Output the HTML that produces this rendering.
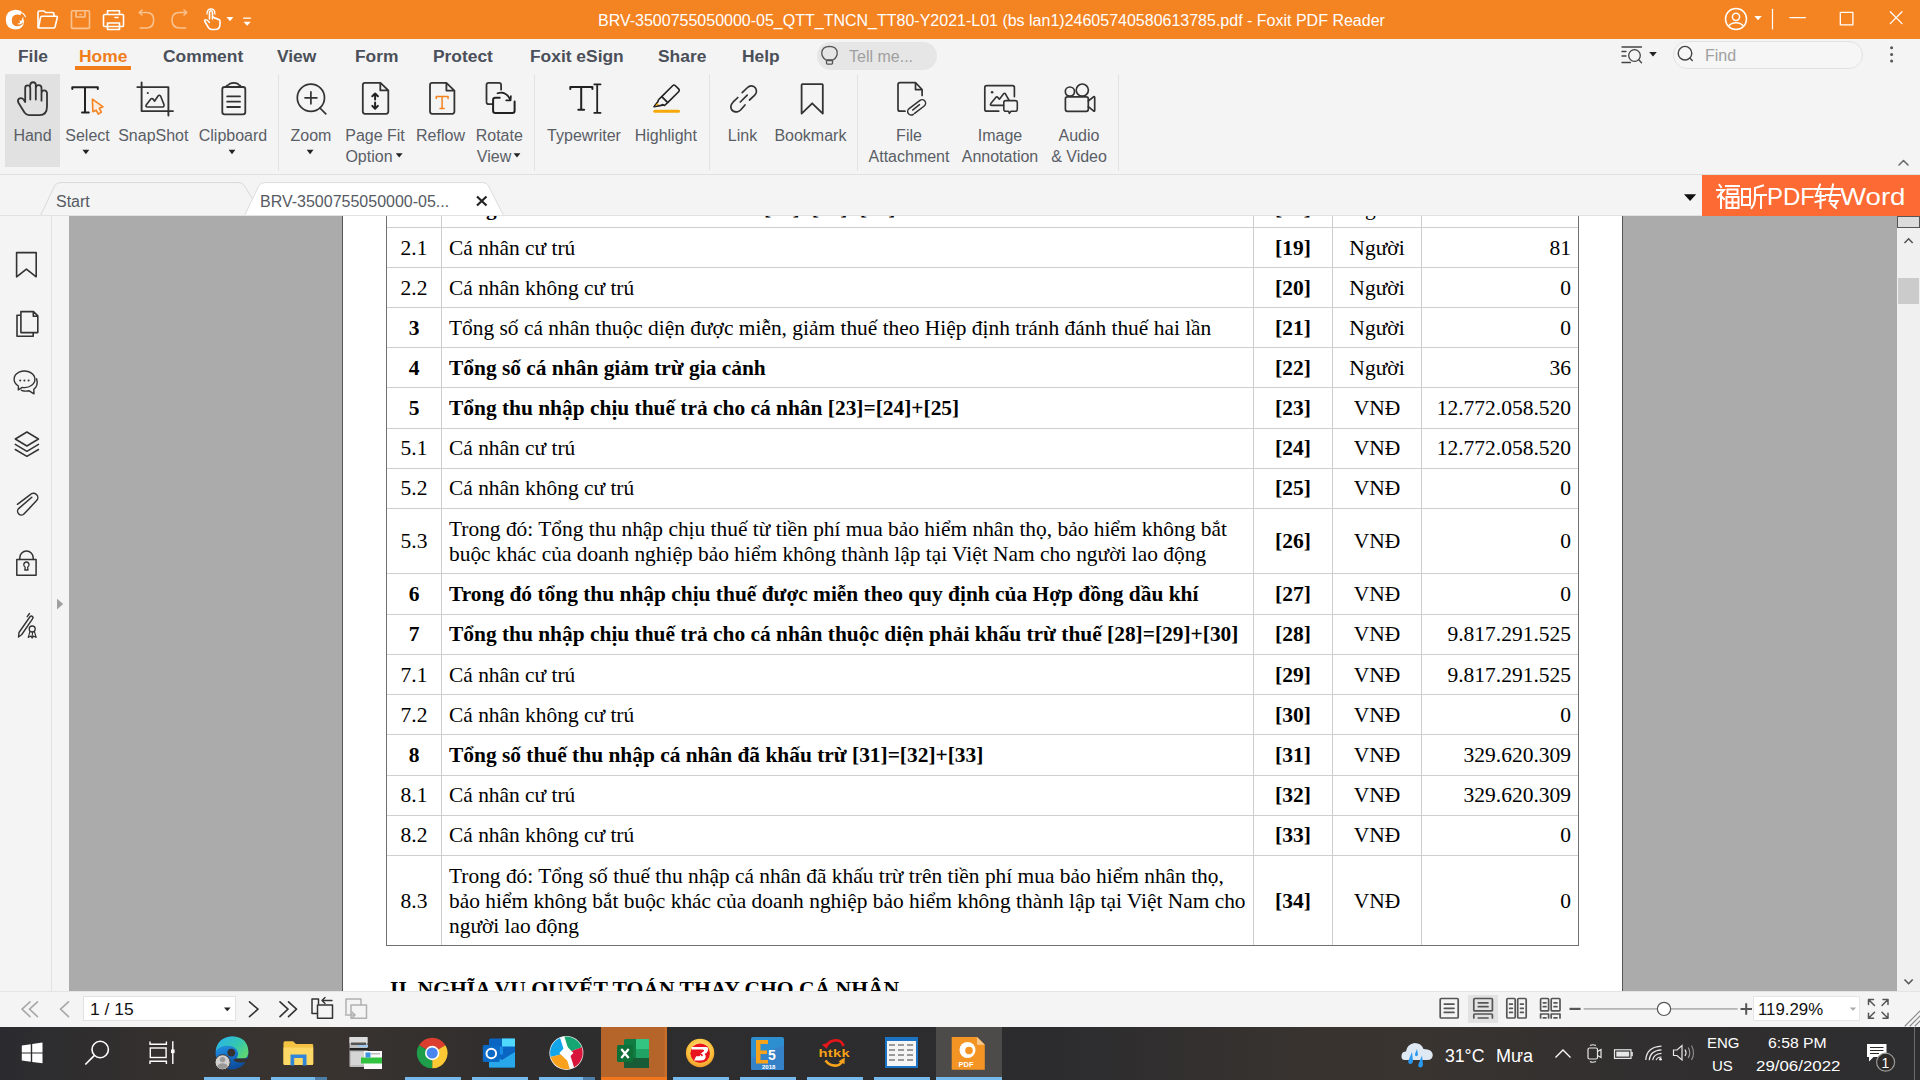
<!DOCTYPE html>
<html><head><meta charset="utf-8">
<style>
*{margin:0;padding:0;box-sizing:border-box}
html,body{width:1920px;height:1080px;overflow:hidden;background:#f4f4f4;font-family:"Liberation Sans",sans-serif}
.a{position:absolute;white-space:nowrap}
#title{left:0;top:0;width:1920px;height:39px;background:#f48322}
.tt{color:#fff;font-size:16px}
.menu{font-size:17.4px;font-weight:bold;color:#4a4f59;top:46px}
.rl{font-size:16px;color:#5a5e66;text-align:center;line-height:21px;margin-top:1px}
.sep{background:#e0e0e0;width:1px}
#doc{left:69px;top:216px;width:1828px;height:775px;background:#ababab;overflow:hidden}
#page{left:273px;top:0;width:1281px;height:775px;background:#fff;border-left:1px solid #555;border-right:1px solid #555}
.ser{font-family:"Liberation Serif",serif;font-size:21.5px;color:#000}
.b{font-weight:bold}
.hl{background:#cfcfcf;height:1px}
.vl{background:#cdcdcd;width:1px}
#taskbar{left:0;top:1027px;width:1920px;height:53px;background:#2c2927}
</style></head><body>
<div id="title" class="a"></div>
<svg class="a" style="left:0;top:0" width="1920" height="39" viewBox="0 0 1920 39" fill="none" stroke="#fff" stroke-width="1.6" stroke-linecap="round" stroke-linejoin="round">
<!-- foxit logo -->
<path fill-rule="evenodd" d="M21.5 11.3 Q18.5 9.6 15 9.8 Q6 10.5 5.8 19.8 Q6 29.3 15.5 29.5 Q23.8 29.3 24 21 L22.2 17.5 Q23.5 21 22.6 24 Q20.5 26.3 16.8 26.2 Q11.8 26 11.8 20.3 Q12 15 17 14.6 Q19 14.5 20.5 15.3 Z" fill="#fff" stroke="none"/>
<path d="M23.2 16.5 L21.3 21 L19.2 20.2 L20.2 22.8 L17 24 Q20.5 25.3 22.6 22.8 Q23.8 20.5 23.2 16.5 Z" fill="#fff" stroke="none"/>
<path d="M18.5 12 Q23.8 12.5 25.4 16.8" stroke-width="1.1"/>
<!-- folder -->
<path d="M38 27.5 V12.5 Q38 11 39.5 11 H44 L45.5 12.5 H52.5 Q54 12.5 54 14 V16"/>
<path d="M38.5 27.8 L40.5 17.5 Q40.8 16.3 42 16.3 H56.5 Q57.6 16.3 57.3 17.5 L55 27 Q54.7 28 53.5 28 H39 Z"/>
<!-- save faded -->
<g stroke="#f9c391"><rect x="71.5" y="10.7" width="18" height="17.7" rx="1"/><path d="M76 10.7 V17 H85 V10.7"/><path d="M80 14.5 H81.2"/></g>
<!-- print -->
<path d="M107.5 14 V10.8 H119.5 V14"/>
<rect x="103.5" y="14.5" width="20" height="12" rx="1"/>
<rect x="107.5" y="23" width="12" height="6.5"/>
<path d="M115 17.5 H118"/>
<!-- undo faded -->
<g stroke="#f9c391"><path d="M139.5 12.5 H146.5 Q153.7 12.5 153.7 20 Q153.7 28 146 28 H140.3"/><path d="M142 10 L139.3 12.5 L142 15"/>
<path d="M186.5 12.5 H179.5 Q172 12.5 172 20 Q172 28 180 28 H185.7"/><path d="M184 10 L186.7 12.5 L184 15"/></g>
<!-- hand touch -->
<path d="M209.5 19 V12.5 Q209.5 10.8 211 10.8 Q212.5 10.8 212.5 12.5 V19 M212.5 17.5 Q214.5 16.8 215 18.5 M215 18.5 Q217 17.8 217.5 19.5 Q219.8 19 220 21 V24 Q220 29.5 215 29.5 H212 Q209 29.5 207.5 26 L204.8 21.5 Q204.3 20 205.5 19.8 Q207 19.5 209.5 22.5"/>
<path d="M207 14 Q207 9 211 9 Q215 9 215 14" stroke-width="1.3"/>
<path d="M226.5 17 H233.5 L230 21.3 Z" fill="#fff" stroke="none"/>
<path d="M243.7 18.2 H250.5" stroke-width="1.3"/>
<path d="M243.5 21.7 H250.8 L247.15 25.8 Z" fill="#fff" stroke="none"/>
<!-- right -->
<circle cx="1736" cy="19" r="10.5" stroke-width="1.5"/>
<circle cx="1736" cy="16.8" r="3.6" stroke-width="1.5"/>
<path d="M1728.5 26.3 Q1731 22.7 1736 22.7 Q1741 22.7 1743.5 26.3" stroke-width="1.5"/>
<path d="M1754.3 16 H1761.8 L1758 20.2 Z" fill="#fff" stroke="none"/>
<path d="M1772.5 9.3 V29" stroke-width="1.2"/>
<path d="M1790 17.7 H1805.3" stroke-width="1.3"/>
<rect x="1840.3" y="12.3" width="12.6" height="12.6" stroke-width="1.3"/>
<path d="M1890.3 11.7 L1902 23.6 M1902 11.7 L1890.3 23.6" stroke-width="1.3"/>
</svg>

<div class="a tt" style="left:598px;top:12px">BRV-3500755050000-05_QTT_TNCN_TT80-Y2021-L01 (bs lan1)24605740580613785.pdf - Foxit PDF Reader</div>

<!-- menu -->
<div class="a menu" style="left:18px">File</div>
<div class="a menu" style="left:79px;color:#f07d1a">Home</div>
<div class="a" style="left:75px;top:66px;width:56px;height:4px;background:#f07d1a"></div>
<div class="a menu" style="left:163px">Comment</div>
<div class="a menu" style="left:277px">View</div>
<div class="a menu" style="left:355px">Form</div>
<div class="a menu" style="left:433px">Protect</div>
<div class="a menu" style="left:530px">Foxit eSign</div>
<div class="a menu" style="left:658px">Share</div>
<div class="a menu" style="left:742px">Help</div>
<div class="a" style="left:817px;top:42px;width:120px;height:28px;background:#e6e6e6;border-radius:14px"></div>
<div class="a" style="left:849px;top:48px;font-size:16px;color:#a0a0a0">Tell me...</div>

<div class="a" style="left:1673px;top:41px;width:190px;height:28px;background:#f6f6f6;border:1px solid #e2e2e2;border-radius:14px"></div>
<div class="a" style="left:1705px;top:47px;font-size:16px;color:#a0a0a0">Find</div>

<!-- ribbon -->
<div class="a" style="left:5px;top:74px;width:55px;height:93px;background:#e1e1e1"></div>
<div class="a" style="left:0;top:174px;width:1920px;height:1px;background:#e0e0e0"></div>

<svg class="a" style="left:0;top:36px" width="1920" height="140" viewBox="0 36 1920 140" fill="none" stroke="#333" stroke-width="1.7" stroke-linecap="round" stroke-linejoin="round">
<!-- Tell me bulb -->
<path d="M826 60 Q821.5 57 821.8 52.5 Q822.3 46.5 829.5 46.3 Q836.8 46.5 837.2 52.5 Q837.5 57 833 60 Z" stroke="#555" stroke-width="1.3"/>
<rect x="826.5" y="60.5" width="6" height="3.6" rx="0.8" stroke="#555" stroke-width="1.3"/>
<!-- search mode icon -->
<g stroke="#444" stroke-width="1.3"><path d="M1622 47 H1641.5 M1622 51.5 H1626 M1622 56 H1626 M1622 62.5 H1630.5"/><circle cx="1634.5" cy="55.5" r="5.8"/><path d="M1638.8 59.8 L1641.5 62.8"/></g>
<path d="M1649.2 52 H1656.8 L1653 56.6 Z" fill="#222" stroke="none"/>
<g stroke="#444" stroke-width="1.4"><circle cx="1685" cy="53.2" r="6.8"/><path d="M1689.8 58 L1692.3 60.4"/></g>
<g fill="#555" stroke="none"><circle cx="1891.6" cy="47.8" r="1.5"/><circle cx="1891.6" cy="54.4" r="1.5"/><circle cx="1891.6" cy="61" r="1.5"/></g>

<!-- Hand -->
<path d="M25.2 102 V88 A2.55 2.55 0 0 1 30.3 88 V99.6 M30.3 85 A2.75 2.75 0 0 1 35.8 85 V99.6 M35.8 88 A2.85 2.85 0 0 1 41.5 88 V100.7 M41.5 93.2 A2.75 2.75 0 0 1 47 93.2 V106.5 Q47 115.2 39.5 115.2 H29 Q26.5 115.2 24.5 112.5 L18.6 103 Q17 100.2 19.2 98.6 Q21.8 97.2 23.8 99.8 L25.2 102" stroke-width="1.8"/>
<!-- Select -->
<path d="M72.3 89 V87.2 H97.8 V89 M85 87.2 V112.6 M82 112.6 H88.8" stroke="#222" stroke-width="2"/>
<path d="M92.4 99.2 L103 106.8 L99.3 108.3 L101.4 112.2 L98.3 114.2 L96.1 110.2 L92.9 111.7 Z" fill="#fdece0" stroke="#f5821f" stroke-width="1.6"/>
<!-- SnapShot -->
<path d="M137.3 87.1 H168.4 V115.5 M141.6 82.4 V111.1 H173" stroke-width="1.9"/>
<circle cx="147.8" cy="93" r="1.1" fill="#333" stroke="none"/>
<path d="M146.4 104.8 L150.8 98.9 Q152.6 97.4 154.5 101.2 L158.2 95.8 Q159.5 94.5 160.8 96.5 L164 104.6 Q164.5 107 162 107 H147.5 Q145 107 146.4 104.8 Z" stroke-width="1.6"/>
<!-- Clipboard -->
<rect x="222.3" y="87" width="23" height="27.3" rx="2.3" stroke-width="1.8"/>
<path d="M226.3 87 Q226.3 85 228.5 85 Q229.5 82.8 233.8 82.8 Q238 82.8 238.8 85 Q240.7 85 240.7 87" stroke-width="1.7"/>
<path d="M227.2 96.4 H240 M227.2 101.7 H240 M227.2 107 H240" stroke-width="1.8"/>
<!-- Zoom -->
<circle cx="310.9" cy="97.8" r="13.6" stroke-width="1.7"/>
<path d="M305 97.8 H316.9 M310.9 91.8 V103.8 M319.9 108 L325.8 113.8" stroke-width="1.7"/>
<!-- Page Fit -->
<path d="M380.5 82.9 H365 Q362.8 82.9 362.8 85.1 V111.6 Q362.8 113.8 365 113.8 H386.1 Q388.3 113.8 388.3 111.6 V90.4 Z M380.3 83 V90.4 H388.3" stroke-width="1.8"/>
<path d="M375.1 93.8 V99.5 M375.1 102.4 V108.3 M372.3 96.3 L375.1 93.5 L377.9 96.3 M372.3 105.9 L375.1 108.7 L377.9 105.9" stroke="#222" stroke-width="2"/>
<!-- Reflow -->
<path d="M446.4 82.9 H432.2 Q430 82.9 430 85.1 V111.6 Q430 113.8 432.2 113.8 H452.2 Q454.4 113.8 454.4 111.6 V90.6 Z M446.4 83 V90.6 H454.4" stroke-width="1.8"/>
<path d="M436.3 98.4 V96.6 H448.1 V98.4 M442.1 96.6 V108.6 M440 108.6 H444.2" stroke="#f5821f" stroke-width="1.5"/>
<!-- Rotate -->
<path d="M486.5 100.5 V85.1 Q486.5 82.9 488.7 82.9 H498.9 Q501.1 82.9 501.1 85.1 V89.7 M486.5 101.9 Q486.5 104.1 488.7 104.1 H492.8" stroke-width="1.8"/>
<path d="M499.7 97.8 H495.3 Q493.1 97.8 493.1 100 V110.8 Q493.1 113 495.3 113 H512.4 Q514.6 113 514.6 110.8 V101.5" stroke="#222" stroke-width="2"/>
<path d="M497.5 93.3 Q506 90.5 510.6 100.2 M506.2 100.4 L510.6 100.3 L510.9 96" stroke="#222" stroke-width="1.7"/>
<!-- separators -->
<g stroke="#e2e2e2" stroke-width="1"><path d="M278.5 75 V170 M534.5 75 V170 M709.5 75 V170 M857.5 75 V170 M1118.5 75 V170"/></g>
<!-- Typewriter -->
<path d="M570.3 89 V87.1 H592.4 V89 M581.2 87.1 V109.8 M578.3 109.8 H584.1" stroke="#222" stroke-width="2"/>
<path d="M597.2 84.5 V112.8 M594.3 84.4 H600.5 M594.3 112.9 H600.5" stroke="#222" stroke-width="1.8"/>
<!-- Highlight -->
<path d="M661.7 96.6 L672.6 85.7 Q674 84.3 675.4 85.7 L678.6 88.9 Q680 90.3 678.6 91.7 L667.7 102.6 M661.7 96.6 L659 99.3 Q658 100.3 658 101.5 L654 106.8 L660 105.6 Q661.4 105.6 662.5 104.6 L664.5 105.5 L667.7 102.6 Z M661.8 96.6 L667.6 102.4" stroke="#222" stroke-width="1.6"/>
<path d="M655 106 L657.3 103 L659 104.8 Z" fill="#f5a90a" stroke="none"/>
<path d="M654.8 111.2 H678.5" stroke="#f5a90a" stroke-width="3"/>
<!-- Link -->
<path d="M737.8 97.5 L733 102.2 Q729.8 105.8 731.4 109.2 Q733.6 112.6 737.6 111.8 Q739.2 111.3 740.6 110 L745 105" stroke-width="1.7"/>
<path d="M742.2 92.7 L747 88 Q750.2 84.8 753.6 86.4 Q757 88.6 756.3 92.4 Q755.9 94 754.5 95.4 L749.5 100" stroke-width="1.7"/>
<path d="M740.3 102 L747.2 95.2" stroke-width="1.7"/>
<!-- Bookmark -->
<path d="M801.6 113.6 V85 Q801.6 84.2 802.4 84.2 H822 Q822.8 84.2 822.8 85 V113.6 L812.2 103.3 Z" stroke-width="1.8"/>
<!-- File Attachment -->
<path d="M905 111.2 H900 Q898 111.2 898 109.2 V84.7 Q898 82.7 900 82.7 H915.5 L922.1 89.5 V95.5 M915.5 82.8 V89.6 H922" stroke-width="1.7"/>
<path d="M914.6 113.4 L924.2 106 A3.5 3.5 0 0 0 920 100.4 L909.1 108.7 A3.5 3.5 0 0 0 913.3 114.3" stroke-width="1.5"/><path d="M912.6 110.1 L919.5 104.6" stroke-width="1.4"/>
<!-- Image Annotation -->
<path d="M998.7 111.2 H986.8 Q984.8 111.2 984.8 109.2 V87.7 Q984.8 85.7 986.8 85.7 H1012.4 Q1014.4 85.7 1014.4 87.7 V96.6" stroke-width="1.7"/>
<circle cx="992.1" cy="92.2" r="1.3" fill="#333" stroke="none"/>
<path d="M1003.4 105.4 H992 Q989.6 105.4 990.8 103.6 L995.8 97.4 Q996.8 96.4 997.8 97.4 L999.4 99.2 L1003.8 93.6 Q1004.6 92.8 1005.4 93.8 L1008.9 100" stroke-width="1.6"/>
<path d="M1005.8 100.6 H1015.3 Q1017.3 100.6 1017.3 102.6 V109.2 Q1017.3 111.2 1015.3 111.2 H1011 L1009.4 113.4 L1008.6 111.2 H1005.8 Q1003.8 111.2 1003.8 109.2 V102.6 Q1003.8 100.6 1005.8 100.6 Z" stroke-width="1.6"/>
<!-- Audio Video -->
<circle cx="1069.9" cy="91.6" r="4.6" stroke-width="1.7"/>
<circle cx="1082.3" cy="90.1" r="6.1" stroke-width="1.7"/>
<rect x="1065.4" y="96.9" width="22.9" height="14.4" rx="2" stroke-width="1.7"/>
<path d="M1088.3 101 L1093.5 96.8 Q1094.7 96 1094.7 97.6 V110.3 Q1094.7 111.8 1093.5 110.9 L1088.3 106.7" stroke-width="1.7"/>
<!-- dropdown arrows -->
<g fill="#222" stroke="none">
<path d="M82.5 149.8 H89.3 L85.9 154.2 Z"/>
<path d="M228.6 149.8 H235.4 L232 154.2 Z"/>
<path d="M306.7 149.8 H313.5 L310.1 154.2 Z"/>
<path d="M395.8 153.2 H402.6 L399.2 157.6 Z"/>
<path d="M513.6 153.2 H520.4 L517 157.6 Z"/>
</g>
<!-- collapse caret -->
<path d="M1899 165 L1903.5 160.5 L1908 165" stroke="#666" stroke-width="1.5"/>
</svg>

<div class="a rl" style="left:-27.5px;width:120px;top:124px">Hand</div>
<div class="a rl" style="left:27.5px;width:120px;top:124px">Select</div>
<div class="a rl" style="left:93.30000000000001px;width:120px;top:124px">SnapShot</div>
<div class="a rl" style="left:173px;width:120px;top:124px">Clipboard</div>
<div class="a rl" style="left:251px;width:120px;top:124px">Zoom</div>
<div class="a rl" style="left:315px;width:120px;top:124px">Page Fit</div>
<div class="a rl" style="left:380.5px;width:120px;top:124px">Reflow</div>
<div class="a rl" style="left:439.3px;width:120px;top:124px">Rotate</div>
<div class="a rl" style="left:524px;width:120px;top:124px">Typewriter</div>
<div class="a rl" style="left:605.8px;width:120px;top:124px">Highlight</div>
<div class="a rl" style="left:682.5px;width:120px;top:124px">Link</div>
<div class="a rl" style="left:750.4px;width:120px;top:124px">Bookmark</div>
<div class="a rl" style="left:849px;width:120px;top:124px">File</div>
<div class="a rl" style="left:940px;width:120px;top:124px">Image</div>
<div class="a rl" style="left:1019px;width:120px;top:124px">Audio</div>
<div class="a rl" style="left:309px;width:120px;top:145px">Option</div>
<div class="a rl" style="left:434px;width:120px;top:145px">View</div>
<div class="a rl" style="left:849px;width:120px;top:145px">Attachment</div>
<div class="a rl" style="left:940px;width:120px;top:145px">Annotation</div>
<div class="a rl" style="left:1019px;width:120px;top:145px">&amp; Video</div>

<!-- tabs -->
<svg class="a" style="left:0;top:172px" width="1920" height="44" viewBox="0 172 1920 44">
<path d="M40.5 215.5 L54.5 186 Q56.5 182.6 60 182.6 H239 Q242.5 182.6 244.5 186 L252 198" fill="#f4f4f4" stroke="#d9d9d9" stroke-width="1"/>
<path d="M244.5 215.5 L258.8 186 Q260.6 182.6 264.5 182.6 H483 Q486.8 182.6 488.5 186 L503.5 215.5 Z" fill="#fff" stroke="#dcdcdc" stroke-width="1"/>
<path d="M0 215.5 H1702" stroke="#e2e2e2" stroke-width="1"/>
<path d="M477 196.5 L486.5 205.5 M486.5 196.5 L477 205.5" stroke="#222" stroke-width="2.2"/>
<path d="M1684 194.2 H1696.2 L1690.1 201 Z" fill="#111"/>
</svg>
<div class="a" style="left:56px;top:193px;font-size:16px;color:#555a63">Start</div>
<div class="a" style="left:260px;top:193px;font-size:16px;color:#555a63">BRV-3500755050000-05...</div>
<div class="a" style="left:1702px;top:175px;width:218px;height:41px;background:#fd6a33"></div>
<svg class="a" style="left:1702px;top:175px" width="218" height="41" viewBox="1702 175 218 41" fill="none" stroke="#fff" stroke-width="2" stroke-linecap="square">
<!-- 福 -->
<path d="M1719.5 185 L1721 187 M1717 190 H1724 L1718 197 M1721 192.5 V208 M1721 196 L1724 199"/>
<path d="M1726 186 H1739 M1727.5 189.5 H1737.5 V194 H1727.5 Z M1726.5 197 H1738.5 V208 H1726.5 Z M1726.5 202.5 H1738.5 M1732.5 197 V208"/>
<!-- 昕 -->
<path d="M1742 189 H1750 V205 H1742 Z M1742 197 H1750"/>
<path d="M1763 185.5 L1755 188 V197 Q1755 204 1751.5 208 M1755 195 H1766 M1761 195 V208"/>
</svg>
<svg class="a" style="left:1702px;top:175px" width="218" height="41" viewBox="1702 175 218 41" fill="none" stroke="#fff" stroke-width="2" stroke-linecap="square">
<!-- 转 -->
<path d="M1815 189 H1825 M1820 184.5 L1816 196 H1825 M1820.5 192 V208 M1815.5 202 L1825 199.5"/>
<path d="M1827 189 H1839 M1826 195 H1840 M1833 184.5 L1829.5 201 H1837.5 L1834 206.5 M1831 203.5 L1836 208"/>
</svg>
<div class="a" style="left:1767px;top:183px;font-size:24px;color:#fff;line-height:28px">PDF</div>
<div class="a" style="left:1840px;top:183px;font-size:24px;color:#fff;line-height:28px;transform:scaleX(1.15);transform-origin:0 0">Word</div>


<!-- left sidebar -->
<svg class="a" style="left:0;top:216px" width="69" height="775" viewBox="0 216 69 775" fill="none" stroke="#333" stroke-width="1.6" stroke-linejoin="round" stroke-linecap="round">
<path d="M16.6 276.8 V252.6 H36.2 V276.8 L26.4 269.1 Z"/>
<path d="M20.3 315.3 H17 V336.3 H33.2 V332.8"/>
<path d="M20.9 311.6 H33.5 L37.8 315.9 V332.6 H20.9 Z M33.3 311.8 V316.2 H37.6"/>
<path d="M18.4 386 A10.4 8.3 0 1 1 22.3 387.4 L18.3 389.8 Z" stroke-width="1.4"/>
<path d="M36.6 378.8 Q38.6 385.5 33.8 389.3 L34 393.9 L29.2 390.8 Q25 391.6 21.4 390.3" stroke-width="1.4"/>
<g fill="#333" stroke="none"><circle cx="20.2" cy="380.5" r="1"/><circle cx="24.4" cy="380.5" r="1"/><circle cx="28.6" cy="380.5" r="1"/></g>
<path d="M26.9 432 L38.5 439 L26.9 446 L15.3 439 Z" stroke-width="1.5"/>
<path d="M15.3 444.3 L26.9 451.3 L38.5 444.3 M15.3 449.5 L26.9 456.3 L38.5 449.5" stroke-width="1.5"/>
<path d="M17.4 504.3 L30.3 494.6 A4.3 4.3 0 0 1 36.6 500.6 L24.2 513.8 A3.8 3.8 0 0 1 18.6 508.6 L31.8 497.2" stroke-width="1.5"/>
<path d="M19.8 559.4 V557.7 A6.7 6.7 0 0 1 33.2 557.7 V559.4" stroke-width="1.5"/>
<rect x="16.8" y="559.4" width="19.3" height="15.8" stroke-width="1.5"/>
<path d="M24.8 570 H28 L27.6 567.3 Q29.3 566.3 29 564.3 Q28.5 562 26.4 562 Q24.3 562 23.8 564.3 Q23.5 566.3 25.2 567.3 Z" stroke-width="1.3"/>
<path d="M18.5 637 L19 632.5 L29.8 617 Q31 615.5 32.3 616.3 Q33.6 617.2 32.5 618.8 L21.8 634.5 Z M27.2 616.6 L29.5 613.5" stroke-width="1.4"/>
<circle cx="32.2" cy="629" r="3" stroke-width="1.3"/>
<path d="M30 631.5 L28.2 637.5 L30.8 636 L32 638 L32.6 632 M34.4 631.5 L36.2 637.5 L33.6 636 L32.4 638" stroke-width="1.1"/>
<path d="M57 598.7 L63.2 604 L57 609.4 Z" fill="#a0a0a0" stroke="none"/>
<path d="M51.5 216 V991" stroke="#e1e1e1" stroke-width="1"/>
</svg>



<div id="doc" class="a">
  <div id="page" class="a"></div>
<div class="a ser" style="left:145px;width:400px;text-align:center;top:-20.26px;font-weight:bold;">2</div>
<div class="a ser" style="left:380px;top:-20.26px;font-weight:bold;transform:scaleX(0.9955);transform-origin:0 0;">Tổng số cá nhân đã khấu trừ thuế [18]=[19]+[20]</div>
<div class="a ser" style="left:1024px;width:400px;text-align:center;top:-20.26px;font-weight:bold;">[18]</div>
<div class="a ser" style="left:1108px;width:400px;text-align:center;top:-20.26px;">Người</div>
<div class="a ser" style="left:1002px;width:500px;text-align:right;top:-20.26px;">81</div>
<div class="a ser" style="left:145px;width:400px;text-align:center;top:19.74px;">2.1</div>
<div class="a ser" style="left:380px;top:19.74px;transform:scaleX(0.9955);transform-origin:0 0;">Cá nhân cư trú</div>
<div class="a ser" style="left:1024px;width:400px;text-align:center;top:19.74px;font-weight:bold;">[19]</div>
<div class="a ser" style="left:1108px;width:400px;text-align:center;top:19.74px;">Người</div>
<div class="a ser" style="left:1002px;width:500px;text-align:right;top:19.74px;">81</div>
<div class="a ser" style="left:145px;width:400px;text-align:center;top:59.74px;">2.2</div>
<div class="a ser" style="left:380px;top:59.74px;transform:scaleX(0.9955);transform-origin:0 0;">Cá nhân không cư trú</div>
<div class="a ser" style="left:1024px;width:400px;text-align:center;top:59.74px;font-weight:bold;">[20]</div>
<div class="a ser" style="left:1108px;width:400px;text-align:center;top:59.74px;">Người</div>
<div class="a ser" style="left:1002px;width:500px;text-align:right;top:59.74px;">0</div>
<div class="a ser" style="left:145px;width:400px;text-align:center;top:99.74px;font-weight:bold;">3</div>
<div class="a ser" style="left:380px;top:99.74px;transform:scaleX(0.9955);transform-origin:0 0;">Tổng số cá nhân thuộc diện được miễn, giảm thuế theo Hiệp định tránh đánh thuế hai lần</div>
<div class="a ser" style="left:1024px;width:400px;text-align:center;top:99.74px;font-weight:bold;">[21]</div>
<div class="a ser" style="left:1108px;width:400px;text-align:center;top:99.74px;">Người</div>
<div class="a ser" style="left:1002px;width:500px;text-align:right;top:99.74px;">0</div>
<div class="a ser" style="left:145px;width:400px;text-align:center;top:139.74px;font-weight:bold;">4</div>
<div class="a ser" style="left:380px;top:139.74px;font-weight:bold;transform:scaleX(0.9955);transform-origin:0 0;">Tổng số cá nhân giảm trừ gia cảnh</div>
<div class="a ser" style="left:1024px;width:400px;text-align:center;top:139.74px;font-weight:bold;">[22]</div>
<div class="a ser" style="left:1108px;width:400px;text-align:center;top:139.74px;">Người</div>
<div class="a ser" style="left:1002px;width:500px;text-align:right;top:139.74px;">36</div>
<div class="a ser" style="left:145px;width:400px;text-align:center;top:179.99px;font-weight:bold;">5</div>
<div class="a ser" style="left:380px;top:179.99px;font-weight:bold;transform:scaleX(0.9955);transform-origin:0 0;">Tổng thu nhập chịu thuế trả cho cá nhân [23]=[24]+[25]</div>
<div class="a ser" style="left:1024px;width:400px;text-align:center;top:179.99px;font-weight:bold;">[23]</div>
<div class="a ser" style="left:1108px;width:400px;text-align:center;top:179.99px;">VNĐ</div>
<div class="a ser" style="left:1002px;width:500px;text-align:right;top:179.99px;">12.772.058.520</div>
<div class="a ser" style="left:145px;width:400px;text-align:center;top:220.24px;">5.1</div>
<div class="a ser" style="left:380px;top:220.24px;transform:scaleX(0.9955);transform-origin:0 0;">Cá nhân cư trú</div>
<div class="a ser" style="left:1024px;width:400px;text-align:center;top:220.24px;font-weight:bold;">[24]</div>
<div class="a ser" style="left:1108px;width:400px;text-align:center;top:220.24px;">VNĐ</div>
<div class="a ser" style="left:1002px;width:500px;text-align:right;top:220.24px;">12.772.058.520</div>
<div class="a ser" style="left:145px;width:400px;text-align:center;top:260.49px;">5.2</div>
<div class="a ser" style="left:380px;top:260.49px;transform:scaleX(0.9955);transform-origin:0 0;">Cá nhân không cư trú</div>
<div class="a ser" style="left:1024px;width:400px;text-align:center;top:260.49px;font-weight:bold;">[25]</div>
<div class="a ser" style="left:1108px;width:400px;text-align:center;top:260.49px;">VNĐ</div>
<div class="a ser" style="left:1002px;width:500px;text-align:right;top:260.49px;">0</div>
<div class="a ser" style="left:145px;width:400px;text-align:center;top:313.24px;">5.3</div>
<div class="a ser" style="left:380px;top:300.86px;transform:scaleX(0.9955);transform-origin:0 0;">Trong đó: Tổng thu nhập chịu thuế từ tiền phí mua bảo hiểm nhân thọ, bảo hiểm không bắt</div>
<div class="a ser" style="left:380px;top:325.62px;transform:scaleX(0.9955);transform-origin:0 0;">buộc khác của doanh nghiệp bảo hiểm không thành lập tại Việt Nam cho người lao động</div>
<div class="a ser" style="left:1024px;width:400px;text-align:center;top:313.24px;font-weight:bold;">[26]</div>
<div class="a ser" style="left:1108px;width:400px;text-align:center;top:313.24px;">VNĐ</div>
<div class="a ser" style="left:1002px;width:500px;text-align:right;top:313.24px;">0</div>
<div class="a ser" style="left:145px;width:400px;text-align:center;top:365.99px;font-weight:bold;">6</div>
<div class="a ser" style="left:380px;top:365.99px;font-weight:bold;transform:scaleX(0.9955);transform-origin:0 0;">Trong đó tổng thu nhập chịu thuế được miễn theo quy định của Hợp đồng dầu khí</div>
<div class="a ser" style="left:1024px;width:400px;text-align:center;top:365.99px;font-weight:bold;">[27]</div>
<div class="a ser" style="left:1108px;width:400px;text-align:center;top:365.99px;">VNĐ</div>
<div class="a ser" style="left:1002px;width:500px;text-align:right;top:365.99px;">0</div>
<div class="a ser" style="left:145px;width:400px;text-align:center;top:406.49px;font-weight:bold;">7</div>
<div class="a ser" style="left:380px;top:406.49px;font-weight:bold;transform:scaleX(0.9955);transform-origin:0 0;">Tổng thu nhập chịu thuế trả cho cá nhân thuộc diện phải khấu trừ thuế [28]=[29]+[30]</div>
<div class="a ser" style="left:1024px;width:400px;text-align:center;top:406.49px;font-weight:bold;">[28]</div>
<div class="a ser" style="left:1108px;width:400px;text-align:center;top:406.49px;">VNĐ</div>
<div class="a ser" style="left:1002px;width:500px;text-align:right;top:406.49px;">9.817.291.525</div>
<div class="a ser" style="left:145px;width:400px;text-align:center;top:446.74px;">7.1</div>
<div class="a ser" style="left:380px;top:446.74px;transform:scaleX(0.9955);transform-origin:0 0;">Cá nhân cư trú</div>
<div class="a ser" style="left:1024px;width:400px;text-align:center;top:446.74px;font-weight:bold;">[29]</div>
<div class="a ser" style="left:1108px;width:400px;text-align:center;top:446.74px;">VNĐ</div>
<div class="a ser" style="left:1002px;width:500px;text-align:right;top:446.74px;">9.817.291.525</div>
<div class="a ser" style="left:145px;width:400px;text-align:center;top:486.74px;">7.2</div>
<div class="a ser" style="left:380px;top:486.74px;transform:scaleX(0.9955);transform-origin:0 0;">Cá nhân không cư trú</div>
<div class="a ser" style="left:1024px;width:400px;text-align:center;top:486.74px;font-weight:bold;">[30]</div>
<div class="a ser" style="left:1108px;width:400px;text-align:center;top:486.74px;">VNĐ</div>
<div class="a ser" style="left:1002px;width:500px;text-align:right;top:486.74px;">0</div>
<div class="a ser" style="left:145px;width:400px;text-align:center;top:526.99px;font-weight:bold;">8</div>
<div class="a ser" style="left:380px;top:526.99px;font-weight:bold;transform:scaleX(0.9955);transform-origin:0 0;">Tổng số thuế thu nhập cá nhân đã khấu trừ [31]=[32]+[33]</div>
<div class="a ser" style="left:1024px;width:400px;text-align:center;top:526.99px;font-weight:bold;">[31]</div>
<div class="a ser" style="left:1108px;width:400px;text-align:center;top:526.99px;">VNĐ</div>
<div class="a ser" style="left:1002px;width:500px;text-align:right;top:526.99px;">329.620.309</div>
<div class="a ser" style="left:145px;width:400px;text-align:center;top:567.24px;">8.1</div>
<div class="a ser" style="left:380px;top:567.24px;transform:scaleX(0.9955);transform-origin:0 0;">Cá nhân cư trú</div>
<div class="a ser" style="left:1024px;width:400px;text-align:center;top:567.24px;font-weight:bold;">[32]</div>
<div class="a ser" style="left:1108px;width:400px;text-align:center;top:567.24px;">VNĐ</div>
<div class="a ser" style="left:1002px;width:500px;text-align:right;top:567.24px;">329.620.309</div>
<div class="a ser" style="left:145px;width:400px;text-align:center;top:607.24px;">8.2</div>
<div class="a ser" style="left:380px;top:607.24px;transform:scaleX(0.9955);transform-origin:0 0;">Cá nhân không cư trú</div>
<div class="a ser" style="left:1024px;width:400px;text-align:center;top:607.24px;font-weight:bold;">[33]</div>
<div class="a ser" style="left:1108px;width:400px;text-align:center;top:607.24px;">VNĐ</div>
<div class="a ser" style="left:1002px;width:500px;text-align:right;top:607.24px;">0</div>
<div class="a ser" style="left:145px;width:400px;text-align:center;top:672.99px;">8.3</div>
<div class="a ser" style="left:380px;top:648.24px;transform:scaleX(0.9955);transform-origin:0 0;">Trong đó: Tổng số thuế thu nhập cá nhân đã khấu trừ trên tiền phí mua bảo hiểm nhân thọ,</div>
<div class="a ser" style="left:380px;top:672.99px;transform:scaleX(0.9955);transform-origin:0 0;">bảo hiểm không bắt buộc khác của doanh nghiệp bảo hiểm không thành lập tại Việt Nam cho</div>
<div class="a ser" style="left:380px;top:697.74px;transform:scaleX(0.9955);transform-origin:0 0;">người lao động</div>
<div class="a ser" style="left:1024px;width:400px;text-align:center;top:672.99px;font-weight:bold;">[34]</div>
<div class="a ser" style="left:1108px;width:400px;text-align:center;top:672.99px;">VNĐ</div>
<div class="a ser" style="left:1002px;width:500px;text-align:right;top:672.99px;">0</div>
<div class="a hl" style="left:318px;top:11px;width:1191px"></div>
<div class="a hl" style="left:318px;top:51px;width:1191px"></div>
<div class="a hl" style="left:318px;top:91px;width:1191px"></div>
<div class="a hl" style="left:318px;top:131px;width:1191px"></div>
<div class="a hl" style="left:318px;top:171px;width:1191px"></div>
<div class="a hl" style="left:318px;top:212px;width:1191px"></div>
<div class="a hl" style="left:318px;top:252px;width:1191px"></div>
<div class="a hl" style="left:318px;top:292px;width:1191px"></div>
<div class="a hl" style="left:318px;top:357px;width:1191px"></div>
<div class="a hl" style="left:318px;top:398px;width:1191px"></div>
<div class="a hl" style="left:318px;top:438px;width:1191px"></div>
<div class="a hl" style="left:318px;top:478px;width:1191px"></div>
<div class="a hl" style="left:318px;top:518px;width:1191px"></div>
<div class="a hl" style="left:318px;top:559px;width:1191px"></div>
<div class="a hl" style="left:318px;top:599px;width:1191px"></div>
<div class="a hl" style="left:318px;top:639px;width:1191px"></div>
<div class="a vl" style="left:372px;top:0;height:729px"></div>
<div class="a vl" style="left:1184px;top:0;height:729px"></div>
<div class="a vl" style="left:1263px;top:0;height:729px"></div>
<div class="a vl" style="left:1352px;top:0;height:729px"></div>
<div class="a" style="left:317px;top:0;width:1px;height:730px;background:#707070"></div>
<div class="a" style="left:1509px;top:0;width:1px;height:730px;background:#707070"></div>
<div class="a" style="left:317px;top:729px;width:1193px;height:1px;background:#707070"></div>
<div class="a ser" style="left:321px;top:761.24px;font-weight:bold;transform:scaleX(1.004);transform-origin:0 0;">II. NGHĨA VỤ QUYẾT TOÁN THAY CHO CÁ NHÂN</div>

</div>

<!-- scrollbar -->
<div class="a" style="left:1897px;top:216px;width:23px;height:775px;background:#f0f0f0"></div>
<div class="a" style="left:1897px;top:216px;width:23px;height:12px;background:#dcdcdc;border:1px solid #555"></div>
<div class="a" style="left:1898px;top:278px;width:21px;height:26px;background:#cbcbcb"></div>
<svg class="a" style="left:1897px;top:216px" width="23" height="775" viewBox="1897 216 23 775" fill="none" stroke="#555" stroke-width="1.6">
<path d="M1904.5 243 L1908.6 238.8 L1912.7 243"/>
<path d="M1904.5 979.5 L1908.6 983.7 L1912.7 979.5"/>
</svg>


<!-- status bar -->
<div class="a" style="left:0;top:991px;width:1920px;height:1px;background:#e4e4e4"></div>
<div class="a" style="left:83px;top:996px;width:153px;height:25px;background:#fff;border:1px solid #e2e2e2"></div>
<div class="a" style="left:90px;top:1001px;font-size:16px;color:#111;line-height:18px;transform:scaleX(1.09);transform-origin:0 0">1 / 15</div>
<div class="a" style="left:1468px;top:995px;width:30px;height:28px;background:#e2e2e2"></div>
<div class="a" style="left:1753px;top:996px;width:107px;height:25px;background:#fff;border:1px solid #e6e6e6"></div>
<div class="a" style="left:1758px;top:1001px;font-size:16px;color:#111;line-height:18px;transform:scaleX(1.05);transform-origin:0 0">119.29%</div>
<svg class="a" style="left:0;top:992px" width="1920" height="35" viewBox="0 992 1920 35" fill="none" stroke="#333" stroke-width="1.6" stroke-linecap="round" stroke-linejoin="round">
<g stroke="#a8a8a8"><path d="M30 1001.8 L22 1009.2 L30 1016.6 M37.5 1001.8 L29.5 1009.2 L37.5 1016.6"/><path d="M68.5 1001.8 L60.5 1009.2 L68.5 1016.6"/></g>
<path d="M224 1007.6 H230.6 L227.3 1011.3 Z" fill="#222" stroke="none"/>
<path d="M249.5 1001.8 L258 1009.2 L249.5 1016.6 M280 1001.8 L288 1009.2 L280 1016.6 M288.5 1001.8 L296.5 1009.2 L288.5 1016.6"/>
<path d="M318.5 1004 V999 H312 V1013.5 H317.5" stroke-width="1.5"/>
<rect x="317.5" y="1005" width="15" height="13.3" stroke-width="1.5"/>
<path d="M332 1000.5 H322 M325 997.5 L322 1000.5 L325 1003.5" stroke-width="1.4"/>
<g stroke="#b0b0b0" stroke-width="1.5"><path d="M346 1013.5 V999 H361 V1005"/><rect x="351" y="1005" width="15.5" height="13.3"/><path d="M345.5 1015 H355 M352 1012 L355 1015 L352 1018"/></g>
<g stroke="#555" stroke-width="1.7">
<rect x="1440.2" y="998.5" width="18" height="19.5" rx="1"/>
<path d="M1444.3 1004.1 H1454 M1444.3 1008.3 H1454 M1444.3 1012.4 H1454"/>
<rect x="1473.8" y="998.5" width="18.6" height="12.4" rx="1"/>
<path d="M1478.3 1002.8 H1488 M1478.3 1006.7 H1488 M1473.8 1018 V1015 Q1473.8 1014 1474.8 1014 H1491.4 Q1492.4 1014 1492.4 1015 V1018 M1478.3 1018 H1488"/>
<rect x="1506.8" y="998.5" width="8.4" height="19.5" rx="1"/>
<rect x="1517.7" y="998.5" width="8.5" height="19.5" rx="1"/>
<path d="M1509.6 1004.1 H1512.4 M1509.6 1008.3 H1512.4 M1509.6 1012.4 H1512.4 M1520.5 1004.1 H1523.3 M1520.5 1008.3 H1523.3 M1520.5 1012.4 H1523.3"/>
<rect x="1540.6" y="998.5" width="8" height="12.4" rx="1"/>
<rect x="1551.2" y="998.5" width="8.8" height="12.4" rx="1"/>
<path d="M1543.3 1002.8 H1546 M1543.3 1006.7 H1546 M1554 1002.8 H1557 M1554 1006.7 H1557 M1540.6 1018 V1014 H1548.6 V1018 M1551.2 1018 V1014 H1560 V1018 M1543.3 1017.8 H1546 M1554 1017.8 H1557"/>
</g>
<path d="M1569.5 1008.9 H1580.6" stroke="#555" stroke-width="2.2" stroke-linecap="butt"/>
<path d="M1584.3 1008.9 H1737" stroke="#b4b4b4" stroke-width="1.6"/>
<circle cx="1664" cy="1008.9" r="6.6" fill="#fff" stroke="#555" stroke-width="1.2"/>
<path d="M1740.5 1009 H1752 M1746.2 1003.2 V1014.8" stroke="#555" stroke-width="2" stroke-linecap="butt"/>
<path d="M1849.8 1007.5 H1856.2 L1853 1010.8 Z" fill="#aaa" stroke="none"/>
<g stroke="#555" stroke-width="1.5"><path d="M1868.5 999.5 L1874.5 1005.5 M1868.5 999.5 V1004.5 M1868.5 999.5 H1873.5"/><path d="M1888 999.5 L1882 1005.5 M1888 999.5 V1004.5 M1888 999.5 H1883"/><path d="M1868.5 1018.2 L1874.5 1012.2 M1868.5 1018.2 V1013.2 M1868.5 1018.2 H1873.5"/><path d="M1888 1018.2 L1882 1012.2 M1888 1018.2 V1013.2 M1888 1018.2 H1883"/></g>
<path d="M1905 1026 L1920 1011 M1910 1026 L1920 1016 M1915 1026 L1920 1021" stroke="#888" stroke-width="1.1"/>
</svg>


<div id="taskbar" class="a"></div>
<svg class="a" style="left:0;top:1027px" width="1920" height="53" viewBox="0 1027 1920 53">
<defs>
<linearGradient id="tbg" x1="0" x2="1" y1="0" y2="0"><stop offset="0" stop-color="#2b2b2f"/><stop offset="0.08" stop-color="#33302e"/><stop offset="0.16" stop-color="#3a3430"/><stop offset="0.26" stop-color="#302e2d"/><stop offset="0.3" stop-color="#2e2d2e"/><stop offset="0.55" stop-color="#2c2c2f"/><stop offset="0.68" stop-color="#38332f"/><stop offset="0.74" stop-color="#393430"/><stop offset="0.85" stop-color="#312f2f"/><stop offset="1" stop-color="#2e2d2f"/></linearGradient>
<linearGradient id="edg" x1="0" y1="0" x2="1" y2="1"><stop offset="0" stop-color="#35c1f1"/><stop offset="0.5" stop-color="#1e90d8"/><stop offset="1" stop-color="#0c59a4"/></linearGradient>
<linearGradient id="edg2" x1="0" y1="0" x2="1" y2="0"><stop offset="0" stop-color="#2fb8e8"/><stop offset="1" stop-color="#6bd66b"/></linearGradient>
</defs>
<rect x="0" y="1027" width="1920" height="53" fill="url(#tbg)"/>
<!-- windows logo -->
<path d="M21.8 1045.5 L30.8 1044.2 V1052.4 H21.8 Z M32.2 1044 L42.5 1042.6 V1052.4 H32.2 Z M21.8 1053.6 H30.8 V1061.8 L21.8 1060.6 Z M32.2 1053.6 H42.5 V1063.2 L32.2 1062 Z" fill="#fff"/>
<!-- search -->
<circle cx="100.2" cy="1049.5" r="8.2" fill="none" stroke="#fff" stroke-width="1.6"/>
<path d="M94.2 1055.6 L85.3 1064.5" stroke="#fff" stroke-width="1.7"/>
<!-- task view -->
<g fill="none" stroke="#fff" stroke-width="1.4"><path d="M150 1041.5 V1044.2 H166.4 V1041.5 M150 1064 V1061.3 H166.4 V1064"/><rect x="150.3" y="1048" width="15.8" height="9.5"/><path d="M172.8 1041.2 V1064"/></g>
<rect x="171" y="1049.5" width="3.6" height="3.6" fill="#fff"/>
<!-- edge -->
<defs>
<linearGradient id="eb" x1="0" y1="0" x2="0.3" y2="1"><stop offset="0" stop-color="#2fa8e6"/><stop offset="0.6" stop-color="#1676cf"/><stop offset="1" stop-color="#0d4f9e"/></linearGradient>
<linearGradient id="eg" x1="0" y1="0.2" x2="1" y2="0.8"><stop offset="0" stop-color="#2ab5e8"/><stop offset="0.55" stop-color="#34c7b0"/><stop offset="1" stop-color="#62d86a"/></linearGradient>
</defs>
<circle cx="232" cy="1053" r="16.4" fill="url(#eb)"/>
<path d="M215.8 1051 Q217.5 1037.5 232 1036.6 Q247.5 1036.8 248.4 1051.5 Q248.6 1058.3 243 1058.6 H236.5 Q239.5 1054 236.8 1049.8 Q232.5 1044.5 224 1046 Q218.5 1047.2 215.8 1051 Z" fill="url(#eg)"/>
<path d="M236.5 1058.6 H249 V1062 Q243 1062.8 238 1062.3 Q234.5 1061.8 233 1059.8 Z" fill="#36312e"/>
<circle cx="231.3" cy="1052.6" r="3.9" fill="#36312e"/>
<circle cx="222.6" cy="1062.3" r="7.6" fill="#d2d0ce" stroke="#36312e" stroke-width="1"/>
<circle cx="222.6" cy="1059.6" r="2.7" fill="#9a9896"/>
<path d="M217.4 1066.8 Q218 1063.3 222.6 1063.3 Q227.2 1063.3 227.8 1066.8 Q225.5 1069 222.6 1069 Q219.7 1069 217.4 1066.8 Z" fill="#9a9896"/>
<!-- explorer -->
<path d="M283.5 1043 Q283.5 1041.3 285 1041.3 H293 L296 1044 H312 Q313.2 1044 313.2 1045.2 V1063.5 Q313.2 1065 312 1065 H285 Q283.5 1065 283.5 1063.5 Z" fill="#f5c342"/>
<path d="M283.5 1047.5 H313.2 V1063.5 Q313.2 1065 312 1065 H285 Q283.5 1065 283.5 1063.5 Z" fill="#fcd866"/>
<path d="M290.5 1065.5 V1054.5 H306.5 V1065.5 H302.8 V1058 H294.2 V1065.5 Z" fill="#2f86d9"/>
<!-- printer app -->
<rect x="349.5" y="1037" width="18" height="30" rx="1" fill="#bdbdbd"/>
<rect x="349.5" y="1037" width="18" height="6" fill="#dcdcdc"/>
<rect x="351" y="1042.5" width="15" height="2.5" fill="#555"/>
<rect x="349.5" y="1048" width="19" height="2.5" fill="#222"/>
<rect x="351" y="1052" width="16" height="13" fill="#d5d5d5"/>
<rect x="358" y="1045" width="10" height="2" fill="#9ac8ee"/>
<rect x="364" y="1051" width="18" height="18" fill="#fafafa"/>
<rect x="361" y="1057.5" width="21" height="6" fill="#31c23f"/>
<rect x="365.5" y="1052.5" width="5" height="5" fill="#3d8fe0"/>
<rect x="371" y="1053" width="9" height="1.5" fill="#bbb"/>
<!-- chrome -->
<path d="M432.2 1053 L418.95 1045.35 A15.3 15.3 0 0 1 445.45 1045.35 Z" fill="#db3e2f"/>
<path d="M432.2 1053 L445.45 1045.35 A15.3 15.3 0 0 1 432.2 1068.3 Z" fill="#fcc934"/>
<path d="M432.2 1053 L432.2 1068.3 A15.3 15.3 0 0 1 418.95 1045.35 Z" fill="#1e9e4a"/>
<circle cx="432.2" cy="1053" r="7.2" fill="#fff"/>
<circle cx="432.2" cy="1053" r="5.6" fill="#4a85ef"/>
<!-- outlook -->
<rect x="489" y="1038.5" width="26" height="29" rx="1.5" fill="#0a64c2"/>
<rect x="502" y="1038.5" width="13" height="8" fill="#50d9ff"/>
<rect x="495" y="1046.5" width="8" height="8" fill="#1b8ce3"/>
<path d="M489 1052 L502 1060 L515 1052 V1067.5 H489 Z" fill="#28a8ea"/>
<rect x="482.8" y="1045" width="17" height="17" rx="1.5" fill="#0b6ac6"/>
<circle cx="491.3" cy="1053.5" r="4.8" fill="none" stroke="#fff" stroke-width="2"/>
<!-- color wheel app -->
<circle cx="566.4" cy="1052.9" r="17" fill="#f2f2f2"/>
<path d="M566.4 1052.9 L550.66 1057.12 A16.3 16.3 0 0 1 562.18 1037.16 Z" fill="#12a5e9"/>
<path d="M566.4 1052.9 L562.18 1037.16 A16.3 16.3 0 0 1 581.72 1047.33 Z" fill="#15a673"/>
<path d="M566.4 1052.9 L581.72 1047.33 A16.3 16.3 0 0 1 571.97 1068.22 Z" fill="#d8163b"/>
<path d="M566.4 1052.9 L571.97 1068.22 A16.3 16.3 0 0 1 550.66 1057.12 Z" fill="#f8a11c"/>
<path d="M562.18 1037.16 L571.97 1068.22" stroke="#fff" stroke-width="4.5"/>
<rect x="561.4" y="1047.9" width="10" height="10" fill="#fff" transform="rotate(45 566.4 1052.9)"/>
<!-- excel (active) -->
<rect x="601" y="1027" width="66" height="53" fill="#b5652a"/>
<rect x="664.5" y="1027" width="2.5" height="53" fill="#c76d2a"/>
<rect x="601" y="1077" width="66" height="3" fill="#f0771d"/>
<rect x="624" y="1039" width="25" height="29" rx="1.5" fill="#107c41"/>
<rect x="636" y="1039" width="13" height="10" fill="#33c481"/>
<rect x="636" y="1049" width="13" height="9" fill="#21a366"/>
<rect x="624" y="1058" width="25" height="10" fill="#185c37"/>
<rect x="617" y="1045" width="16" height="17" rx="1.5" fill="#0f7037"/>
<path d="M621.3 1049 L628.7 1058 M628.7 1049 L621.3 1058" stroke="#fff" stroke-width="2.2"/>
<!-- B app -->
<defs><radialGradient id="bg1" cx="0.5" cy="0.4" r="0.6"><stop offset="0" stop-color="#ffe9a0"/><stop offset="0.7" stop-color="#f9c23c"/><stop offset="1" stop-color="#f39a2a"/></radialGradient></defs>
<circle cx="700.1" cy="1053" r="14.2" fill="url(#bg1)"/>
<circle cx="700.2" cy="1053.3" r="9.8" fill="#e8141e"/>
<path d="M691.6 1047 H706 Q709 1047.3 708 1050.5 Q707 1053 704.5 1054 Q706.5 1055.5 705.5 1058 Q704.5 1060.5 700.5 1060.5 H694 L696.2 1056.3 H699.5 L700.6 1054.8 L701.6 1056.6 Q703 1056.3 702.8 1055 Q702.5 1053.8 700.5 1053.8 L702.8 1052 Q704.5 1051.5 704 1050.2 Q703.6 1049.4 702 1049.4 H691.8 Z" fill="#fff"/>
<!-- E5 -->
<rect x="751" y="1037" width="33" height="33" rx="2" fill="#2d8fd0"/>
<path d="M751 1058 L784 1045 V1070 H751 Z" fill="#3a7cc4" opacity="0.7"/>
<path d="M756 1040 H768 V1044 H760.5 V1050.5 H767 V1054 H760.5 V1060 H768 V1063.5 H756 Z" fill="#f7a21b"/>
<text x="768" y="1060" font-family="Liberation Sans" font-size="14" font-weight="bold" fill="#fff">5</text>
<text x="762" y="1069" font-family="Liberation Sans" font-size="6" font-weight="bold" fill="#fff">2018</text>
<!-- htkk -->
<path d="M826 1047 Q829 1039.5 838 1040.5 Q842 1041.5 843.5 1046" fill="none" stroke="#e3161a" stroke-width="2.6"/>
<path d="M821.8 1044.5 L829.5 1042.5 L826.5 1048.8 Z" fill="#e3161a"/>
<path d="M825.5 1060.5 Q830 1066.5 837 1065.5 Q841 1064.5 843 1060" fill="none" stroke="#f7a21b" stroke-width="2.6"/>
<path d="M844.8 1057.5 L844.5 1064 L838.5 1061.5 Z" fill="#f7a21b"/>
<text x="818.5" y="1057.3" font-family="Liberation Sans" font-size="11.5" font-weight="bold" fill="#f7a21b" stroke="#1a1a1a" stroke-width="0.6" paint-order="stroke" letter-spacing="0.2" textLength="31.5" lengthAdjust="spacingAndGlyphs">htkk</text>
<!-- table app -->
<rect x="885" y="1037" width="33" height="31" fill="#1b74c4"/>
<rect x="887" y="1041" width="29" height="25" fill="#f4f4f4"/>
<g fill="#9a9a9a"><rect x="889" y="1044" width="6" height="2"/><rect x="898" y="1044" width="6" height="2"/><rect x="907" y="1044" width="6" height="2"/><rect x="889" y="1049" width="6" height="2"/><rect x="898" y="1049" width="6" height="2"/><rect x="907" y="1049" width="6" height="2"/><rect x="889" y="1054" width="6" height="2"/><rect x="898" y="1054" width="6" height="2"/><rect x="907" y="1054" width="6" height="2"/><rect x="889" y="1059" width="6" height="2"/><rect x="898" y="1059" width="6" height="2"/><rect x="907" y="1059" width="6" height="2"/></g>
<!-- foxit (active gray) -->
<rect x="936" y="1027" width="66" height="53" fill="#4d4b4a"/>
<path d="M951.7 1037 H977 L984.8 1044.8 V1069.7 H951.7 Z" fill="#f39425"/>
<path d="M977 1037 V1044.8 H984.8 Z" fill="#fbc88a"/>
<circle cx="967.5" cy="1050" r="8" fill="#fff"/>
<circle cx="969" cy="1050.5" r="3.8" fill="#f39425"/>
<text x="958.5" y="1067" font-family="Liberation Sans" font-size="7.5" font-weight="bold" fill="#fff">PDF</text>
<!-- running indicators -->
<g fill="#76b9ed">
<rect x="204" y="1077" width="56" height="3"/><rect x="271" y="1077" width="56" height="3"/>
<rect x="405" y="1077" width="56" height="3"/><rect x="472" y="1077" width="56" height="3"/><rect x="539" y="1077" width="56" height="3"/>
<rect x="673" y="1077" width="56" height="3"/><rect x="740" y="1077" width="56" height="3"/><rect x="807" y="1077" width="56" height="3"/><rect x="874" y="1077" width="56" height="3"/><rect x="936" y="1077" width="66" height="3"/>
</g>
<rect x="315" y="1077" width="12" height="3" fill="#4d7ea8"/>
<rect x="583" y="1077" width="12" height="3" fill="#4d7ea8"/>
<!-- weather -->
<path d="M1405 1060 Q1401 1060 1401.5 1055.5 Q1402 1051.5 1406 1051.5 Q1407 1044 1414.5 1043 Q1421.5 1043 1423.5 1049 Q1432.5 1049 1432.8 1055 Q1432.5 1060 1427.5 1060 Z" fill="#dfe9f3"/>
<path d="M1412 1052 L1408.5 1060.5 Q1407.5 1063.5 1410.2 1064 Q1412.7 1064 1413 1061 Z M1422 1055.5 L1418.5 1064 Q1417.5 1067 1420.2 1067.5 Q1422.7 1067.5 1423 1064.5 Z M1417 1049 L1415 1054 Q1414.5 1056 1416.2 1056.2 Q1417.8 1056.2 1418 1054.5 Z" fill="#2a9af0"/>
<!-- tray icons -->
<path d="M1555.5 1057.5 L1563 1050 L1570.5 1057.5" fill="none" stroke="#fff" stroke-width="1.3"/>
<g fill="none" stroke="#e8e8e8" stroke-width="1.2"><rect x="1588" y="1048" width="9.5" height="11" rx="1.5"/><path d="M1597.5 1051.5 L1601 1049.5 V1057.5 L1597.5 1055.5 M1590 1045.5 Q1592.5 1044 1596 1045.5 M1590 1061.5 Q1592.5 1063 1596 1061.5"/></g>
<rect x="1614.5" y="1049.8" width="16.5" height="8.6" fill="none" stroke="#e8e8e8" stroke-width="1.2"/>
<rect x="1616.3" y="1051.6" width="12.9" height="5" fill="#e8e8e8"/>
<rect x="1631.2" y="1052" width="1.6" height="4.2" fill="#e8e8e8"/>
<g fill="none" stroke="#e8e8e8" stroke-width="1.2"><path d="M1645.8 1060 Q1646.5 1047 1661.5 1046.2"/><path d="M1649.2 1060.2 Q1650 1050.5 1661.5 1049.8" /><path d="M1652.7 1060.2 Q1653.5 1054 1661.5 1053.4"/><path d="M1656.2 1060.2 Q1656.8 1057.2 1661.5 1057" /></g>
<circle cx="1660.5" cy="1059.3" r="1.3" fill="#fff"/>
<g fill="none" stroke="#e8e8e8" stroke-width="1.2"><path d="M1673.5 1050 H1677 L1682 1045.5 V1060 L1677 1055.5 H1673.5 Z"/><path d="M1685 1049.5 Q1687 1052.7 1685 1056"/><path d="M1688.2 1047.5 Q1691.3 1052.7 1688.2 1058" stroke="#9a9a9a"/><path d="M1691.5 1045.5 Q1695.5 1052.7 1691.5 1060" stroke="#8a8a8a"/></g>
<!-- notification -->
<path d="M1867 1044 H1886.5 V1057 H1873.5 L1869 1061.5 V1057 H1867 Z" fill="#fff"/>
<path d="M1870 1047.5 H1883.5 M1870 1050.5 H1883.5 M1870 1053.5 H1879" stroke="#2d2a28" stroke-width="1"/>
<circle cx="1885.6" cy="1062.2" r="9" fill="#2d2a28" stroke="#9a9a9a" stroke-width="1.2"/>
<text x="1881.6" y="1067.6" font-family="Liberation Sans" font-size="14" fill="#fff">1</text>
<rect x="1914" y="1027" width="1" height="53" fill="#6a6a6a"/>
</svg>
<div class="a" style="left:1445px;top:1045px;font-size:18px;color:#fff;line-height:22px;transform:scaleX(0.98);transform-origin:0 0">31°C</div>
<div class="a" style="left:1496px;top:1045px;font-size:18px;color:#fff;line-height:22px">Mưa</div>
<div class="a" style="left:1707px;top:1034px;font-size:15px;color:#fff;line-height:18px">ENG</div>
<div class="a" style="left:1712px;top:1057px;font-size:15px;color:#fff;line-height:18px">US</div>
<div class="a" style="left:1768px;top:1034px;font-size:15px;color:#fff;line-height:18px;transform:scaleX(1.05);transform-origin:0 0">6:58 PM</div>
<div class="a" style="left:1756px;top:1057px;font-size:15px;color:#fff;line-height:18px;transform:scaleX(1.125);transform-origin:0 0">29/06/2022</div>

</body></html>
